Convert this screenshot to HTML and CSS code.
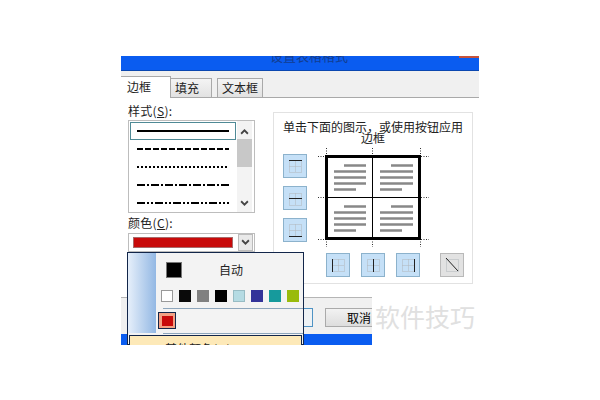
FILE: index.html
```html
<!DOCTYPE html>
<html lang="zh">
<head>
<meta charset="utf-8">
<title>设置表格格式</title>
<link rel="stylesheet" href="styles.css">
</head>
<body>
<div class="dialog">
  <div class="titlebar"><span class="title">设置表格格式</span></div>
  <div class="tabs">
    <span class="tab active">边框</span>
    <span class="tab second">填充</span>
    <span class="tab third">文本框</span>
  </div>
  <div class="content">
    <div class="left">
      <div class="label">样式(<u>S</u>):</div>
      <div class="stylelist">
        <div class="lines">
          <div class="line selected"><i class="solid"></i></div>
          <div class="line"><i class="dash"></i></div>
          <div class="line"><i class="dot"></i></div>
          <div class="line"><i class="dashdot"></i></div>
          <div class="line"><i class="dashdotdot"></i></div>
        </div>
        <div class="scroll">
          <svg class="arrow up" viewBox="0 0 8 6"><path d="M1 5 4 2 7 5" /></svg>
          <div class="thumb"></div>
          <svg class="arrow down" viewBox="0 0 8 6"><path d="M1 1 4 4 7 1" /></svg>
        </div>
      </div>
      <div class="label color">颜色(<u>C</u>):</div>
      <div class="combo">
        <div class="swatch"></div>
        <div class="dropbtn"><svg class="arrow" viewBox="0 0 8 6"><path d="M1 1 4 4 7 1" /></svg></div>
      </div>
    </div>
    <div class="preview">
      <div class="hint">单击下面的图示，或使用按钮应用<br>边框</div>
      <svg class="diagram" width="199" height="143" viewBox="0 0 199 143">
        <g>
          <rect class="btn" x="10.500" y="14.500" width="23" height="23"/>
          <rect class="btn" x="10.500" y="46.500" width="23" height="23"/>
          <rect class="btn" x="10.500" y="78.500" width="23" height="23"/>
          <rect class="btn" x="53.500" y="113.500" width="23" height="23"/>
          <rect class="btn" x="88.500" y="113.500" width="23" height="23"/>
          <rect class="btn" x="123.500" y="113.500" width="23" height="23"/>
          <rect class="btn off" x="167.500" y="113.500" width="23" height="23"/>
        </g>
        <g class="dots">
          <rect x="16.500" y="20.500" width="12" height="12"/><path d="M16.500 26.500H28.500M22.500 20.500V32.500"/>
          <rect x="16.500" y="53.500" width="12" height="12"/><path d="M22.500 53.500V65.500"/>
          <rect x="16.500" y="84.500" width="12" height="12"/><path d="M16.500 90.500H28.500M22.500 84.500V96.500"/>
          <rect x="59.500" y="119.500" width="12" height="12"/><path d="M59.500 125.500H71.500M65.500 119.500V131.500"/>
          <rect x="94.500" y="119.500" width="12" height="12"/><path d="M94.500 125.500H106.500"/>
          <rect x="129.500" y="119.500" width="12" height="12"/><path d="M129.500 125.500H141.500M135.500 119.500V131.500"/>
          <rect x="173.500" y="119.500" width="12" height="12"/>
        </g>
        <path class="ink" d="M16 20.500H29M16 58.500H29M16 96.500H29M59.500 119V132M100.500 119V132M141.500 119V132M173 118 185 131"/>
        <path class="guides" d="M53.500 8V16M99.500 8V16M147.500 8V16M53.500 99V107M99.500 99V107M147.500 99V107M45 16.500H53M45 57.500H53M45 99.500H53M148 16.500H156M148 57.500H156M148 99.500H156"/>
        <rect class="frame" x="53.500" y="16.500" width="93" height="82"/>
        <path class="inner" d="M54 57.500H147M99.500 17V99"/>
        <path class="text" d="M71 25.500H93M61 31.500H93M61 37.500H93M61 43.500H93M61 49.500H83M118 25.500H140M107 31.500H140M107 37.500H140M107 43.500H140M107 49.500H129M71 66.500H93M61 72.500H93M61 78.500H93M61 84.500H93M61 90.500H83M118 66.500H140M107 72.500H140M107 78.500H140M107 84.500H140M107 90.500H129"/>
      </svg>
    </div>
  </div>
  <div class="footer">
    <div class="okbtn"></div>
    <div class="cancel">取消</div>
  </div>
  <div class="bottombar"></div>
  <div class="menu">
    <div class="auto"><span class="autobox"></span><span class="autotext">自动</span></div>
    <div class="palette">
      <i class="c white"></i><i class="c black"></i><i class="c gray"></i><i class="c black2"></i><i class="c pale"></i><i class="c indigo"></i><i class="c teal"></i><i class="c lime"></i>
    </div>
    <div class="sep"></div>
    <div class="recent"><span class="picked"><i></i></span></div>
    <div class="sep"></div>
    <div class="more">其他颜色(M)...</div>
  </div>
</div>
<div class="watermark">软件技巧</div>
</body>
</html>
```

FILE: styles.css
```css
html, body { margin: 0; padding: 0; background: #fff; }
body { width: 600px; height: 400px; overflow: hidden; position: relative; font-family: "Noto Sans CJK SC", "Liberation Sans", sans-serif; color: #222; }

.dialog { position: relative; width: 358px; height: 289px; margin: 0 0 0 121px; top: 56px; background: #f0f0f0; display: flex; flex-direction: column; overflow: hidden; }

.titlebar { height: 14px; background: linear-gradient(#c5533d, #c5533d) right top / 20px 2px no-repeat, #0a5cf0; border-bottom: 1px solid #0a47b0; overflow: hidden; text-align: center; flex: none; }
.title { display: block; font-size: 13px; line-height: 14px; color: #16336f; margin-top: -7px; margin-left: 18px; opacity: .75; }

.tabs { display: flex; height: 26px; box-sizing: border-box; flex: none; align-items: flex-end; background: #f0f0f0; }
.tab { height: 18px; line-height: 18px; font-size: 12px; text-align: center; border: 1px solid #a9a9a9; border-bottom: 0; background: linear-gradient(#f4f4f4, #e2e2e2); }
.tab.second { width: 32px; padding-right: 8px; margin-left: -1px; }
.tab.third { width: 44px; margin-left: 5px; }
.tab.active { width: 49px; height: 21px; line-height: 20px; background: #fff; border-left: 0; text-align: left; text-indent: 6px; position: relative; top: 1px; }

.content { flex: none; height: 200px; background: #fff; border-top: 1px solid #a9a9a9; display: flex; padding: 6px 0 0 7px; box-sizing: border-box; }

.left { width: 127px; flex: none; display: flex; flex-direction: column; }
.label { font-size: 12px; line-height: 14px; height: 16px; letter-spacing: .3px; }
.label.color { margin-top: 3px; height: 17px; }

.stylelist { width: 127px; height: 93px; flex: none; box-sizing: border-box; border: 1px solid #bdbdbd; display: flex; background: #fff; }
.lines { width: 108px; display: flex; flex-direction: column; padding: 1px 0 0 1px; box-sizing: border-box; }
.line { height: 18px; width: 106px; box-sizing: border-box; display: flex; align-items: center; padding: 0 7px; }
.line.selected { border: 1px solid #4f8a96; padding: 0 6px; }
.line i { display: block; width: 92px; height: 2px; }
.solid { background: #000; }
.dash { background: repeating-linear-gradient(90deg, #000 0 6px, transparent 6px 8px); }
.dot { background: repeating-linear-gradient(90deg, #000 0 2px, transparent 2px 4px); }
.dashdot { background: repeating-linear-gradient(90deg, #000 0 8px, transparent 8px 10px, #000 10px 12px, transparent 12px 14px); }
.dashdotdot { background: repeating-linear-gradient(90deg, #000 0 8px, transparent 8px 10px, #000 10px 12px, transparent 12px 14px, #000 14px 16px, transparent 16px 18px); }

.scroll { width: 15px; background: #f3f3f3; display: flex; flex-direction: column; align-items: center; }
.arrow { width: 9px; height: 7px; flex: none; }
.arrow path { fill: none; stroke: #444; stroke-width: 1.600; }
.arrow.up { margin: 7px 0 4px; }
.arrow.down { margin: auto 0 5px; }
.thumb { width: 100%; height: 28px; background: #c8c8c8; flex: none; }

.combo { width: 127px; height: 19px; flex: none; display: flex; gap: 5px; box-sizing: border-box; border: 1px solid #bdbdbd; padding: 3px 1px 3px 4px; }
.swatch { width: 100px; background: #c80a0a; border: 1px solid #a86a6a; box-sizing: border-box; }
.dropbtn { flex: 1; background: #e9e9e9; border: 1px solid #bbb; display: flex; align-items: center; justify-content: center; margin: -3px 0; }

.preview { width: 200px; height: 172px; box-sizing: border-box; border: 1px solid #e2e2e2; margin-top: 8px; margin-left: 18px; flex: none; text-align: center; }
.hint { font-size: 12px; line-height: 11px; margin-top: 8px; height: 19px; color: #222; white-space: nowrap; }
.diagram { display: block; margin-left: -1px; }
.btn { fill: #c5e0f7; stroke: #8cb2cc; stroke-width: 1; }
.btn.off { fill: #e2e2e2; stroke: #b9b9b9; }
.dots rect, .dots path { fill: none; stroke: #b0b6bb; stroke-width: 1; stroke-dasharray: 1 1; }
.ink { fill: none; stroke: #222; stroke-width: 1; }
.guides { fill: none; stroke: #333; stroke-width: 1; stroke-dasharray: 1 1.500; }
.frame { fill: #fff; stroke: #000; stroke-width: 3; }
.inner { fill: none; stroke: #000; stroke-width: 1; }
.text { fill: none; stroke: #888; stroke-width: 2.400; }

.footer { flex: none; height: 37px; background: #f0f0f0; border-top: 1px solid #b5b5b5; display: flex; align-items: flex-start; padding: 10px 0 0 170px; box-sizing: border-box; gap: 12px; }
.okbtn { width: 22px; height: 19px; border: 1px solid #4f93c4; background: #eef2f5; box-sizing: border-box; }
.cancel { width: 68px; height: 19px; box-sizing: border-box; border: 1px solid #aaa; background: linear-gradient(#f2f2f2, #ddd); font-size: 12px; line-height: 17px; text-align: center; color: #000; }
.bottombar { flex: 1; background: #0a5cf0; }

.menu { position: absolute; left: 6px; top: 196px; width: 177px; height: 93px; box-sizing: border-box; border: 1px solid #12264a; background: linear-gradient(90deg, #e6effa, #93b8e4) 0 0 / 28px 80px no-repeat, #f3f3f3; display: flex; flex-direction: column; }
.auto { flex: none; height: 33px; margin-bottom: 4px; display: flex; align-items: center; padding-left: 38px; box-sizing: border-box; }
.autobox { width: 16px; height: 16px; box-sizing: border-box; background: #000; border: 1px solid #777; }
.autotext { font-size: 12px; margin-left: 37px; }
.palette { flex: none; display: flex; gap: 6px; padding-left: 33px; height: 12px; margin-bottom: 6px; }
.c { display: block; width: 12px; height: 12px; box-sizing: border-box; }
.white { background: #fff; border: 1px solid #999; }
.black { background: #0a0a0a; }
.gray { background: #808080; }
.black2 { background: #000; }
.pale { background: #b5dbe3; border: 1px solid #98bcc4; }
.indigo { background: #333399; }
.teal { background: #169a9c; }
.lime { background: #99bb0c; }
.sep { flex: none; height: 1px; margin-left: 35px; background: #8ea6bc; }
.recent { flex: none; height: 24px; box-sizing: border-box; padding: 3px 0 0 30px; }
.picked { width: 18px; height: 17px; box-sizing: border-box; border: 1px solid #12264a; background: #f3a184; display: flex; align-items: center; justify-content: center; }
.picked i { display: block; width: 11px; height: 10px; background: #c80a0a; }
.more { flex: none; margin: 1px 1px 0; height: 20px; box-sizing: border-box; border: 1px solid #12264a; background: #fde9b8; font-size: 12px; line-height: 14px; padding: 6px 0 0 35px; color: #222; white-space: nowrap; }

.watermark { position: absolute; left: 372px; top: 296px; width: 120px; height: 50px; background: #fff; color: #e0e0e0; font-size: 25px; line-height: 41px; padding-left: 3px; box-sizing: border-box; white-space: nowrap; }
```
